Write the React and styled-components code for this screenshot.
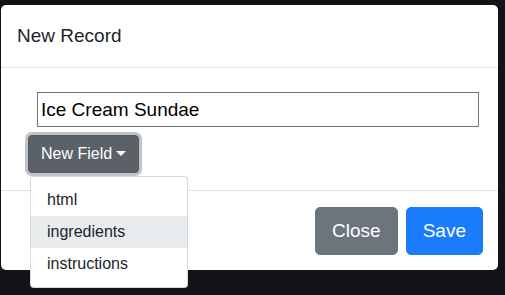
import React from "react";
import styled, { createGlobalStyle } from "styled-components";

const Global = createGlobalStyle`
  html, body { margin: 0; padding: 0; }
  body {
    background: #121316;
    font-family: "Liberation Sans", Arial, Helvetica, sans-serif;
    color: #212529;
    width: 505px;
    height: 295px;
    overflow: hidden;
  }
  * { box-sizing: border-box; }
`;

const Modal = styled.div`
  margin: 5px 0 0 1px;
  width: 497px;
  background: #fff;
  border-radius: 5px;
  display: flex;
  flex-direction: column;
`;

const Header = styled.div`
  padding: 16px;
  border-bottom: 1px solid #dee2e6;
  display: flex;
  align-items: center;
`;

const Title = styled.h5`
  margin: 0;
  font-size: 19px;
  line-height: 30px;
  font-weight: 400;
  color: #212529;
`;

const Body = styled.div`
  padding: 16px 16px 17px;
  display: flex;
  flex-direction: column;
  align-items: flex-start;
`;

const NameInput = styled.input`
  margin: 8px 0 0 20px;
  width: 442px;
  height: 35px;
  border: 1px solid #767676;
  border-radius: 0;
  padding: 0 3px;
  font-family: inherit;
  font-size: 19px;
  color: #000;
  outline: none;
`;

const DropWrap = styled.div`
  position: relative;
  margin: 8px 0 0 11px;
`;

const ToggleButton = styled.button`
  display: inline-flex;
  align-items: center;
  height: 38px;
  padding: 6px 12px;
  font-family: inherit;
  font-size: 16px;
  line-height: 24px;
  color: #fff;
  background: #5a6268;
  border: 1px solid #545b62;
  border-radius: 4px;
  box-shadow: 0 0 0 3px rgba(130, 138, 145, 0.5);
  cursor: pointer;
`;

const Caret = styled.span`
  display: inline-block;
  margin-left: 4px;
  width: 0;
  height: 0;
  border-top: 5px solid #fff;
  border-left: 5px solid transparent;
  border-right: 5px solid transparent;
  transform: translateY(-1px);
`;

const Menu = styled.div`
  position: absolute;
  top: calc(100% + 3px);
  left: 2px;
  width: 158px;
  padding: 7px 0;
  background: #fff;
  border: 1px solid rgba(0, 0, 0, 0.15);
  border-radius: 4px;
  z-index: 10;
`;

const Item = styled.div`
  height: 32px;
  padding: 4px 16px;
  font-size: 16px;
  line-height: 24px;
  color: #212529;
  background: ${(p) => (p.$active ? "#e9ecef" : "transparent")};
  white-space: nowrap;
`;

const Footer = styled.div`
  display: flex;
  justify-content: flex-end;
  align-items: center;
  gap: 8px;
  padding: 16px 15px 15px;
  border-top: 1px solid #dee2e6;
`;

const LgButton = styled.button`
  height: 48px;
  padding: 8px 16px;
  font-family: inherit;
  font-size: 19px;
  line-height: 30px;
  color: #fff;
  background: ${(p) => (p.$variant === "primary" ? "#1a7bfb" : "#6c757d")};
  border: 1px solid ${(p) => (p.$variant === "primary" ? "#1a7bfb" : "#6c757d")};
  border-radius: 5px;
  cursor: pointer;
`;

export default function App() {
  const items = ["html", "ingredients", "instructions"];
  return (
    <>
      <Global />
      <Modal>
        <Header>
          <Title>New Record</Title>
        </Header>
        <Body>
          <NameInput defaultValue="Ice Cream Sundae" />
          <DropWrap>
            <ToggleButton>
              New Field
              <Caret />
            </ToggleButton>
            <Menu>
              {items.map((it) => (
                <Item key={it} $active={it === "ingredients"}>
                  {it}
                </Item>
              ))}
            </Menu>
          </DropWrap>
        </Body>
        <Footer>
          <LgButton>Close</LgButton>
          <LgButton $variant="primary">Save</LgButton>
        </Footer>
      </Modal>
    </>
  );
}
